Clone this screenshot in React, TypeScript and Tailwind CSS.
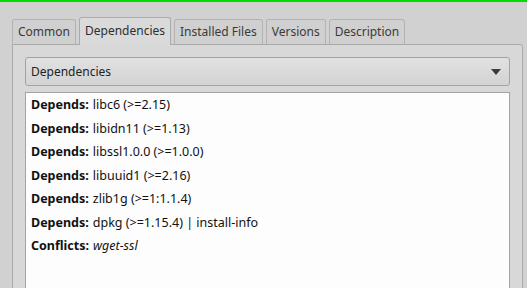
import React from 'react';

const tabs = ['Common', 'Dependencies', 'Installed Files', 'Versions', 'Description'];

const deps: { label: string; value: string; italic?: boolean }[] = [
  { label: 'Depends:', value: 'libc6 (>=2.15)' },
  { label: 'Depends:', value: 'libidn11 (>=1.13)' },
  { label: 'Depends:', value: 'libssl1.0.0 (>=1.0.0)' },
  { label: 'Depends:', value: 'libuuid1 (>=2.16)' },
  { label: 'Depends:', value: 'zlib1g (>=1:1.1.4)' },
  { label: 'Depends:', value: 'dpkg (>=1.15.4) | install-info' },
  { label: 'Conflicts:', value: 'wget-ssl', italic: true },
];

export default function App() {
  return (
    <div className="w-[527px] h-[288px] overflow-hidden bg-[#d1d1d1] font-['Noto_Sans',sans-serif] text-[12px]">
      <div className="h-[2px] bg-[#00dc00]" />
      {/* Tab strip */}
      <div className="flex items-end gap-[3px] pl-[12px] pt-[15px] h-[42px]">
        {tabs.map((t) => {
          const active = t === 'Dependencies';
          return (
            <div
              key={t}
              className={`px-[5px] rounded-t-[3px] border border-b-0 leading-none flex items-center ${
                active
                  ? 'h-[28px] bg-[#dadada] border-[#ababab] text-[#2e2e2e] relative z-10 -mb-px pb-[2px]'
                  : 'h-[25px] bg-[#d0d0d0] border-[#b3b3b3] text-[#3a3a3a]'
              }`}
            >
              {t}
            </div>
          );
        })}
      </div>
      {/* Panel */}
      <div className="ml-[12px] w-[511px] h-[260px] bg-[#d8d8d8] border border-[#a9a9a9] rounded-tr-[3px] px-[12px] pt-[12px]">
        <div className="h-[29px] rounded-[3px] border border-[#a3a3a3] bg-gradient-to-b from-[#e1e1e1] to-[#d3d3d3] flex items-center justify-between pl-[5px] pr-[8px] text-[#222]">
          <span>Dependencies</span>
          <svg width="10" height="6" viewBox="0 0 10 6">
            <path d="M0 0 L10 0 L5 6 Z" fill="#3a3a3a" />
          </svg>
        </div>
        <div className="mt-[6px] h-[220px] bg-[#fdfdfd] border border-[#a3a3a3] pl-[5px] pt-[1px] text-[#111] text-[12.5px]">
          {deps.map((d, i) => (
            <div key={i} className="h-[23.5px] flex items-center whitespace-nowrap">
              <span className="font-bold mr-[4px]">{d.label}</span>
              <span className={d.italic ? 'italic' : ''}>{d.value}</span>
            </div>
          ))}
        </div>
      </div>
    </div>
  );
}
